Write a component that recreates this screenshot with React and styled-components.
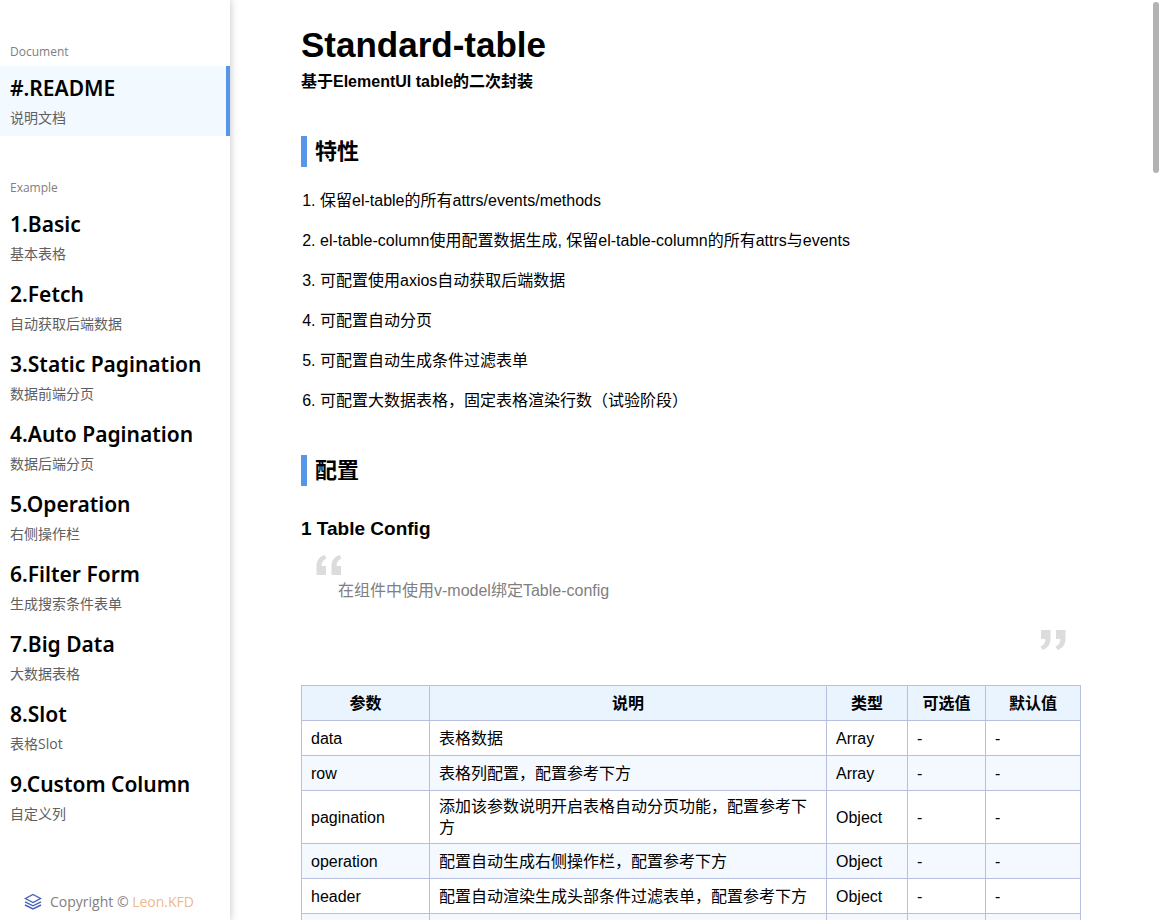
import React from 'react';
import styled, { createGlobalStyle } from 'styled-components';

const documents = [{ title: '#.README', desc: '说明文档', active: true }];

const examples = [
  { title: '1.Basic', desc: '基本表格' },
  { title: '2.Fetch', desc: '自动获取后端数据' },
  { title: '3.Static Pagination', desc: '数据前端分页' },
  { title: '4.Auto Pagination', desc: '数据后端分页' },
  { title: '5.Operation', desc: '右侧操作栏' },
  { title: '6.Filter Form', desc: '生成搜索条件表单' },
  { title: '7.Big Data', desc: '大数据表格' },
  { title: '8.Slot', desc: '表格Slot' },
  { title: '9.Custom Column', desc: '自定义列' },
];

const features = [
  '保留el-table的所有attrs/events/methods',
  'el-table-column使用配置数据生成, 保留el-table-column的所有attrs与events',
  '可配置使用axios自动获取后端数据',
  '可配置自动分页',
  '可配置自动生成条件过滤表单',
  '可配置大数据表格，固定表格渲染行数（试验阶段）',
];

const columns = ['参数', '说明', '类型', '可选值', '默认值'];

const rows = [
  ['data', '表格数据', 'Array', '-', '-'],
  ['row', '表格列配置，配置参考下方', 'Array', '-', '-'],
  ['pagination', '添加该参数说明开启表格自动分页功能，配置参考下方', 'Object', '-', '-'],
  ['operation', '配置自动生成右侧操作栏，配置参考下方', 'Object', '-', '-'],
  ['header', '配置自动渲染生成头部条件过滤表单，配置参考下方', 'Object', '-', '-'],
  ['', '', '', '', ''],
];

const MenuGroup = ({ label, items }) => (
  <Group>
    <GroupLabel>{label}</GroupLabel>
    {items.map((item) => (
      <MenuItem key={item.title} href="#" $active={item.active}>
        <MenuTitle>{item.title}</MenuTitle>
        <MenuDesc>{item.desc}</MenuDesc>
      </MenuItem>
    ))}
  </Group>
);

const QuoteMark = ({ closing }) => (
  <QuoteIcon $closing={closing} viewBox="0 0 26 20" aria-hidden="true">
    <path d="M8.500 0 L10.500 3.500 C7 5 5.700 7.500 5.500 11 H10 V20 H0.500 V11 C0.500 5.500 3.500 1.500 8.500 0 Z" />
    <path d="M23.500 0 L25.500 3.500 C22 5 20.700 7.500 20.500 11 H25 V20 H15.500 V11 C15.500 5.500 18.500 1.500 23.500 0 Z" />
  </QuoteIcon>
);

const App = () => {
  return (
    <Page>
      <GlobalStyle />
      <Sidebar>
        <nav>
          <MenuGroup label="Document" items={documents} />
          <MenuGroup label="Example" items={examples} />
        </nav>
        <Copyright>
          <LogoIcon viewBox="0 0 18 18" aria-hidden="true">
            <path d="M9 1.500 L16.500 5.500 L9 9.500 L1.500 5.500 Z" />
            <path d="M1 8.800 L9 12.800 L17 8.800" />
            <path d="M1 12 L9 16 L17 12" />
          </LogoIcon>
          <span>
            Copyright © <a href="#">Leon.KFD</a>
          </span>
        </Copyright>
      </Sidebar>

      <Content>
        <Title>Standard-table</Title>
        <Subtitle>基于ElementUI table的二次封装</Subtitle>

        <SectionTitle>特性</SectionTitle>
        <FeatureList>
          {features.map((feature) => (
            <li key={feature}>{feature}</li>
          ))}
        </FeatureList>

        <SectionTitle>配置</SectionTitle>
        <SubHeading>1 Table Config</SubHeading>
        <Quote>
          <QuoteMark />
          <p>在组件中使用v-model绑定Table-config</p>
          <QuoteMark closing />
        </Quote>

        <ConfigTable>
          <colgroup>
            <Col $width="128px" />
            <Col />
            <Col $width="81px" />
            <Col $width="78px" />
            <Col $width="95px" />
          </colgroup>
          <thead>
            <tr>
              {columns.map((column) => (
                <th key={column}>{column}</th>
              ))}
            </tr>
          </thead>
          <tbody>
            {rows.map((row, index) => (
              <tr key={index}>
                {row.map((cell, i) => (
                  <td key={i}>{cell}</td>
                ))}
              </tr>
            ))}
          </tbody>
        </ConfigTable>
      </Content>
      <ScrollThumb />
    </Page>
  );
};

const GlobalStyle = createGlobalStyle`
  * {
    box-sizing: border-box;
  }

  body {
    margin: 0;
    color: #000;
    background: #fff;
    font-family: "Liberation Sans", Arial, "Noto Sans CJK SC", sans-serif;
    font-size: 16px;
  }

  a {
    text-decoration: none;
  }
`;

const Page = styled.div`
  display: flex;
  height: 100vh;
  overflow: hidden;
`;

const Sidebar = styled.aside`
  display: flex;
  flex-direction: column;
  justify-content: space-between;
  flex: 0 0 230px;
  padding-top: 38px;
  box-shadow: 0 0 8px rgba(0, 0, 0, 0.25);
  font-family: "Open Sans", "Noto Sans CJK SC", sans-serif;
`;

const Group = styled.section`
  margin-bottom: 38px;
`;

const GroupLabel = styled.div`
  padding: 0 10px;
  height: 28px;
  line-height: 28px;
  font-size: 12px;
  color: #808080;
`;

const MenuItem = styled.a`
  display: block;
  height: 70px;
  padding: 7px 10px;
  color: #000;
  background: ${(props) => (props.$active ? '#f2f9ff' : 'transparent')};
  border-right: 4px solid ${(props) => (props.$active ? '#5595ea' : 'transparent')};
`;

const MenuTitle = styled.div`
  font-family: "Noto Sans", sans-serif;
  font-size: 21px;
  font-weight: 600;
  line-height: 30px;
  white-space: nowrap;
`;

const MenuDesc = styled.div`
  margin-top: 4px;
  font-size: 14px;
  line-height: 22px;
  color: #606060;
`;

const Copyright = styled.footer`
  display: flex;
  align-items: center;
  gap: 8px;
  padding: 0 24px 8px;
  font-size: 14px;
  line-height: 20px;
  color: #808080;
  white-space: nowrap;

  a {
    color: #f0b88c;
  }
`;

const LogoIcon = styled.svg`
  width: 18px;
  height: 18px;
  fill: none;
  stroke: #4560b8;
  stroke-width: 1.4;
`;

const Content = styled.main`
  flex: 1;
  min-width: 0;
  padding: 24px 80px 0 71px;
  overflow: auto;
  scrollbar-width: none;
`;

const Title = styled.h1`
  margin: 0;
  font-size: 35px;
  line-height: 42px;
`;

const Subtitle = styled.p`
  margin: 4px 0 42px;
  font-weight: 700;
  line-height: 24px;
`;

const SectionTitle = styled.h2`
  margin: 0;
  padding-left: 8px;
  border-left: 6px solid #5595ea;
  font-size: 22px;
  line-height: 31px;
`;

const FeatureList = styled.ol`
  margin: 14px 0 34px;
  padding-left: 19px;
  line-height: 40px;
`;

const SubHeading = styled.h3`
  margin: 30px 0 13px;
  font-size: 19px;
  line-height: 26px;
`;

const Quote = styled.blockquote`
  display: flex;
  flex-direction: column;
  margin: 0 0 35px;
  padding: 0 15px;
  color: #808080;

  p {
    margin: 0 0 23px;
    padding: 0 22px;
    line-height: 32px;
  }
`;

const QuoteIcon = styled.svg`
  width: 26px;
  height: 20px;
  fill: #dcdcdc;
  align-self: ${(props) => (props.$closing ? 'flex-end' : 'flex-start')};
  transform: ${(props) => (props.$closing ? 'rotate(180deg)' : 'none')};
`;

const ConfigTable = styled.table`
  width: 100%;
  table-layout: fixed;
  border-collapse: collapse;
  line-height: 21px;

  th,
  td {
    height: 35px;
    padding: 5px 9px;
    border: 1px solid #b9bfdf;
    text-align: left;
  }

  th {
    background: #e9f4ff;
    text-align: center;
  }

  tbody tr:nth-child(even) {
    background: #f3f9ff;
  }
`;

const Col = styled.col`
  width: ${(props) => props.$width || 'auto'};
`;

const ScrollThumb = styled.div`
  position: fixed;
  top: 2px;
  right: 2px;
  width: 6px;
  height: 171px;
  border-radius: 3px;
  background: #b3b3b3;
`;

export default App;
